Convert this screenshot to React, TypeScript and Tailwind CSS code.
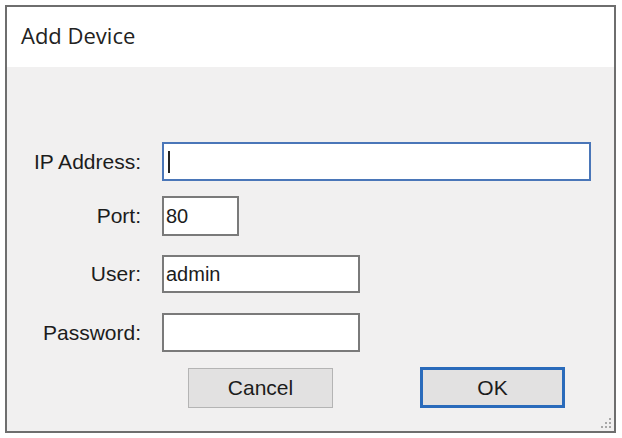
import React from "react";

export default function App() {
  const font = { fontFamily: '"Liberation Sans", Arial, sans-serif' };
  return (
    <div className="w-[622px] h-[438px] bg-white pt-[5px] pl-[5px] overflow-hidden">
      <div className="w-[611px] h-[428px] border-2 border-[#6e6e6e] flex flex-col">
        <div className="h-[60px] bg-white flex items-center pl-[14px] pb-[3px]">
          <span className="text-[22px] text-[#222]" style={{ fontFamily: '"Open Sans", "Noto Sans", sans-serif' }}>
            Add Device
          </span>
        </div>
        <div className="flex-1 bg-[#f1f0f0] relative text-[21px] text-[#1c1c1c]" style={font}>
          <div className="flex flex-col pt-[75px]">
            <div className="flex items-center h-[39px]">
              <div className="w-[134px] text-right">IP Address:</div>
              <div className="ml-[21px] w-[429px] h-[39px] border-2 border-[#4a76b8] bg-white flex items-center pl-[4px]">
                <div className="w-[2px] h-[22px] bg-[#222]" />
              </div>
            </div>
            <div className="flex items-center h-[40px] mt-[15px]">
              <div className="w-[134px] text-right">Port:</div>
              <div className="ml-[21px] w-[77px] h-[40px] border-2 border-[#7a7a7a] bg-white flex items-center pl-[2px] text-[20px]">
                80
              </div>
            </div>
            <div className="flex items-center h-[38px] mt-[19px]">
              <div className="w-[134px] text-right">User:</div>
              <div className="ml-[21px] w-[198px] h-[38px] border-2 border-[#7a7a7a] bg-white flex items-center pl-[2px] text-[20px]">
                admin
              </div>
            </div>
            <div className="flex items-center h-[39px] mt-[20px]">
              <div className="w-[134px] text-right">Password:</div>
              <div className="ml-[21px] w-[198px] h-[39px] border-2 border-[#7a7a7a] bg-white" />
            </div>
            <div className="flex items-center mt-[15px] pl-[181px]">
              <div className="w-[145px] h-[40px] border border-[#b4b4b4] bg-[#e2e1e1] flex items-center justify-center">
                Cancel
              </div>
              <div className="ml-[87px] w-[145px] h-[41px] border-[3px] border-[#2a6bbb] bg-[#e2e1e1] flex items-center justify-center">
                OK
              </div>
            </div>
          </div>
          <svg className="absolute right-[2px] bottom-[2px]" width="12" height="12" viewBox="0 0 12 12">
            <rect x="9" y="1" width="2" height="2" fill="#a8a8a8" />
            <rect x="5" y="5" width="2" height="2" fill="#a8a8a8" />
            <rect x="9" y="5" width="2" height="2" fill="#a8a8a8" />
            <rect x="1" y="9" width="2" height="2" fill="#a8a8a8" />
            <rect x="5" y="9" width="2" height="2" fill="#a8a8a8" />
            <rect x="9" y="9" width="2" height="2" fill="#a8a8a8" />
          </svg>
        </div>
      </div>
    </div>
  );
}
